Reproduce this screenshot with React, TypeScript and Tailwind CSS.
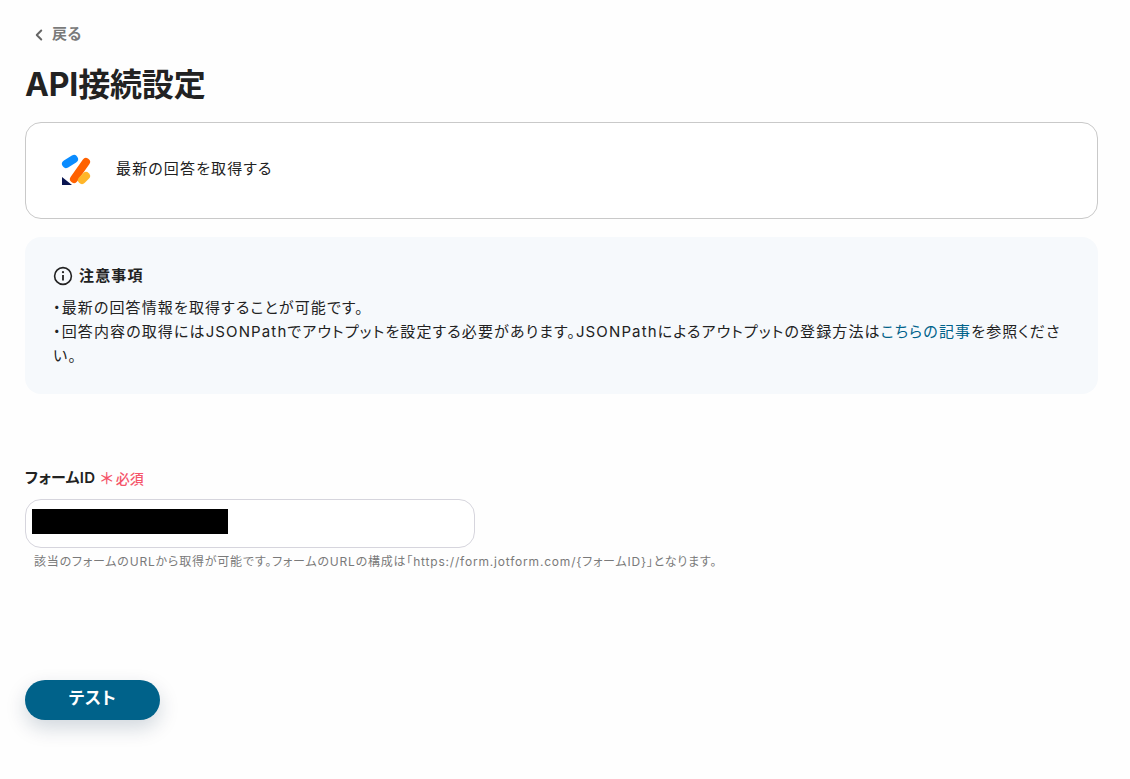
import { ChevronLeft } from "lucide-react";

const FONT = "font-['Inter','Noto_Sans_CJK_JP',sans-serif] [font-feature-settings:'palt']";

function JotformLogo() {
  return (
    <svg width="32" height="32" viewBox="0 0 32 32" fill="none" strokeLinecap="round" strokeWidth="8" className="shrink-0">
      <path d="M6 11 L14 6" stroke="#0a8cff" />
      <path d="M14 26 L26 9" stroke="#ff6100" />
      <path d="M22 27 L26 23" stroke="#ffb629" />
      <path d="M2 24 L2 32 L12 32 Z" fill="#0a1551" />
    </svg>
  );
}

function InfoIcon() {
  return (
    <svg width="20" height="20" viewBox="0 0 20 20" fill="none" className="shrink-0">
      <circle cx="10" cy="10" r="8.4" stroke="#222222" strokeWidth="1.6" />
      <circle cx="10" cy="6.2" r="1.1" fill="#222222" />
      <path d="M10 9v5.6" stroke="#222222" strokeWidth="1.8" />
    </svg>
  );
}

export default function App() {
  return (
    <div className={`${FONT} min-h-[779px] bg-[#fefefe] text-[#222222] pl-[25px] pr-[32px] pt-[24px]`}>
      {/* Back link */}
      <div className="flex items-center h-[21px] pl-[5px] gap-[4px] text-[15px] font-semibold tracking-[0.03em] text-[#7a7a7a]">
        <ChevronLeft size={18} strokeWidth={2.6} className="text-[#666666]" />
        <span>戻る</span>
      </div>

      <h1 className="mt-[16px] text-[32px] leading-[48px] font-bold tracking-[-0.005em]">API接続設定</h1>

      {/* Selected action */}
      <div className="mt-[13px] h-[97px] flex items-center gap-[24px] pl-[34px] pb-[3px] rounded-[16px] border border-[#c9c9c9] bg-white">
        <JotformLogo />
        <span className="text-[15px] tracking-[0.075em]">最新の回答を取得する</span>
      </div>

      {/* Notice */}
      <div className="mt-[18px] h-[157px] rounded-[16px] bg-[#f6f9fc] pl-[28px] pr-[36px] pt-[29px]">
        <div className="flex items-center gap-[6px] h-[20px] text-[15px] font-bold tracking-[0.075em]">
          <InfoIcon />
          <span>注意事項</span>
        </div>
        <p className="mt-[10px] text-[15px] leading-[24px] tracking-[0.075em]">
          ・最新の回答情報を取得することが可能です。
          <br />
          ・回答内容の取得にはJSONPathでアウトプットを設定する必要があります。JSONPathによるアウトプットの登録方法は
          <span className="text-[#00628a]">こちらの記事</span>
          を参照ください。
        </p>
      </div>

      {/* Form field */}
      <div className="mt-[74px] flex items-center h-[20px] text-[15px] font-semibold tracking-[0.02em]">
        <span>フォームID</span>
        <span className="ml-[5px] text-[#f5556a] text-[16px] leading-none font-medium">＊</span>
        <span className="ml-[2px] text-[14px] font-medium tracking-normal text-[#f5556a]">必須</span>
      </div>
      <div className="mt-[11px] w-[450px] h-[49px] rounded-[16px] border border-[#d6d5dd] bg-white pl-[6px] pt-[9px]">
        <div className="w-[196px] h-[25px] bg-black" />
      </div>
      <p className="mt-[5px] pl-[9px] text-[12px] leading-[18px] tracking-[0.067em] text-[#7a7a7a]">
        該当のフォームのURLから取得が可能です。フォームのURLの構成は「https://form.jotform.com/&#123;フォームID&#125;」となります。
      </p>

      <button className="mt-[109px] block w-[135px] h-[40px] pb-[2px] rounded-full bg-[#00628a] text-white text-[17px] font-bold tracking-[0.03em] shadow-[0_8px_20px_rgba(0,40,70,0.18)]">
        テスト
      </button>
    </div>
  );
}
